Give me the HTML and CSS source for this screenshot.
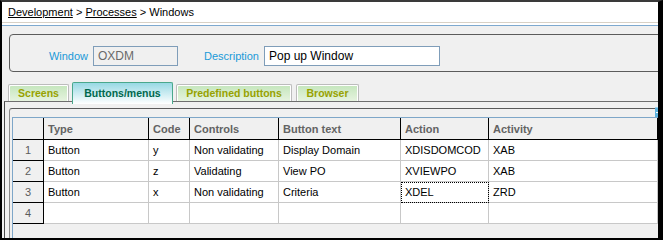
FILE: index.html
```html
<!DOCTYPE html>
<html lang="en">
<head>
  <meta charset="UTF-8">
  <title>Windows</title>
  <link rel="stylesheet" href="styles.css">
</head>
<body>
  <div class="screen">
    <div class="crumbs"><a href="#">Development</a> &gt; <a href="#">Processes</a> &gt; Windows</div>
    <div class="crumbs-rule"></div>

    <div class="head-box">
      <label class="lbl lbl-window">Window</label>
      <span class="field field-ro">OXDM</span>
      <label class="lbl lbl-desc">Description</label>
      <span class="field field-desc">Pop up Window</span>
    </div>

    <div class="tabs">
      <div class="tab tab-screens">Screens</div>
      <div class="tab tab-active">Buttons/menus</div>
      <div class="tab tab-predef">Predefined buttons</div>
      <div class="tab tab-browser">Browser</div>
    </div>

    <div class="panel">
      <div class="frame">
        <div class="grid-wrap">
          <table class="grid">
            <colgroup>
              <col class="c-num"><col class="c-type"><col class="c-code"><col class="c-ctrl">
              <col class="c-text"><col class="c-action"><col class="c-activity">
            </colgroup>
            <tr class="hdr">
              <th class="num"></th><th>Type</th><th>Code</th><th>Controls</th>
              <th>Button text</th><th>Action</th><th>Activity</th>
            </tr>
            <tr>
              <td class="num">1</td><td>Button</td><td>y</td><td>Non validating</td>
              <td>Display Domain</td><td>XDISDOMCOD</td><td>XAB</td>
            </tr>
            <tr>
              <td class="num">2</td><td>Button</td><td>z</td><td>Validating</td>
              <td>View PO</td><td>XVIEWPO</td><td>XAB</td>
            </tr>
            <tr>
              <td class="num">3</td><td>Button</td><td>x</td><td>Non validating</td>
              <td>Criteria</td><td class="focus">XDEL</td><td>ZRD</td>
            </tr>
            <tr>
              <td class="num">4</td><td></td><td></td><td></td>
              <td></td><td></td><td></td>
            </tr>
          </table>
        </div>
      </div>
    </div>

    <span class="corner-icon"></span>
  </div>
</body>
</html>
```

FILE: styles.css
```css
body {
  margin: 0;
  font-family: "Liberation Sans", Arial, sans-serif;
  font-size: 11px;
  color: #000;
}

.screen {
  position: relative;
  width: 663px;
  height: 240px;
  box-sizing: border-box;
  border-top: 2px solid #3a3a3a;
  border-left: 2px solid #000;
  border-right: 5px solid #000;
  border-bottom: 2px solid #000;
  background-color: #f0f0f0;
  overflow: hidden;
  display: flex;
  flex-direction: column;
}

/* breadcrumb */
.crumbs {
  height: 20px;
  line-height: 20px;
  padding-left: 6px;
  background-color: #fff;
  border-bottom: 1px solid #d8d1c6;
}
.crumbs a {
  color: #000;
  text-decoration: underline;
}
.crumbs-rule {
  height: 2px;
  background-color: #fff;
  border-bottom: 1px solid #7ea9cf;
}

/* header fields */
.head-box {
  display: flex;
  align-items: center;
  margin: 8px -10px 0 7px;
  padding: 11px 0 5px 0;
  border: 1px solid #5c5c5c;
  border-radius: 4px;
}
.lbl {
  color: #1a9ad8;
  text-align: right;
  margin-right: 5px;
}
.lbl-window {
  width: 78px;
}
.lbl-desc {
  width: 81px;
}
.field {
  height: 20px;
  line-height: 19px;
  box-sizing: border-box;
  border: 1px solid #7f9db9;
  padding-left: 4px;
}
.field-ro {
  width: 85px;
  background-color: #f0f0f0;
  color: #6a6a6a;
  font-size: 12px;
}
.field-desc {
  width: 176px;
  background-color: #fff;
  font-size: 12px;
}

/* tabs */
.tabs {
  display: flex;
  align-items: flex-end;
  margin: 10px 0 0 6px;
}
.tab {
  height: 17px;
  line-height: 17px;
  box-sizing: border-box;
  text-align: center;
  font-weight: bold;
  font-size: 10.5px;
  color: #98a200;
  border: 1px solid #bcbcbc;
  border-bottom: none;
  border-radius: 2px 2px 0 0;
  box-shadow: inset 1px 1px 0 #fff, inset -1px 0 0 #fff;
  background: linear-gradient(#c4e6bc, #e6f3df);
}
.tab-screens {
  width: 61px;
}
.tab-active {
  position: relative;
  z-index: 1;
  width: 101px;
  height: 22px;
  line-height: 21px;
  margin: 0 3px 0 3px;
  margin-bottom: -3px;
  color: #00684c;
  border-color: #4aa88c;
  box-shadow: none;
  background: linear-gradient(#98d9e4, #ffffff);
}
.tab-predef {
  width: 116px;
}
.tab-browser {
  width: 63px;
  margin-left: 4px;
}

/* panel and grid */
.panel {
  flex: 1;
  margin: 0 -10px 0 2px;
  border-top: 1px solid #6e6e6e;
  border-left: 1px solid #4a4a4a;
  display: flex;
}
.frame {
  flex: 1;
  margin: 6px 0 0 4px;
  border-top: 1px solid #5a5a5a;
  border-left: 1px solid #8a8a8a;
  border-top-left-radius: 3px;
  display: flex;
}
.grid-wrap {
  flex: 1;
  margin: 8px 0 0 2px;
  border-top: 1px solid #7ea6c8;
  border-left: 1px solid #7ea6c8;
}
.grid {
  table-layout: fixed;
  border-collapse: separate;
  border-spacing: 0;
  width: 645px;
}
.c-num { width: 31px; }
.c-type { width: 105px; }
.c-code { width: 41px; }
.c-ctrl { width: 89px; }
.c-text { width: 122px; }
.c-action { width: 88px; }
.c-activity { width: 169px; }

.grid th,
.grid td {
  box-sizing: border-box;
  padding: 0 0 0 4px;
  text-align: left;
  white-space: nowrap;
  overflow: hidden;
  border-right: 1px solid #c8c8c8;
  border-bottom: 1px solid #c8c8c8;
}
.grid td {
  height: 21px;
  background-color: #fff;
}
.grid th {
  height: 22px;
  font-weight: bold;
  color: #636363;
  background-color: #f0f0f0;
  border-right-color: #000;
  border-bottom-color: #000;
}
.grid .num {
  padding: 0;
  text-align: center;
  color: #5c5c5c;
  background-color: #f0f0f0;
  border-right-color: #000;
  border-bottom-color: #000;
}
.grid .focus {
  outline: 1px dotted #000;
  outline-offset: -1px;
}

.corner-icon {
  position: absolute;
  top: 105px;
  right: -6px;
  width: 9px;
  height: 9px;
  background-color: #5cb2de;
  border-top: 1px solid #9fd3ee;
}
.corner-icon::after {
  content: "";
  position: absolute;
  left: 1px;
  top: 4px;
  width: 3px;
  height: 1px;
  background-color: #fff;
}
```
